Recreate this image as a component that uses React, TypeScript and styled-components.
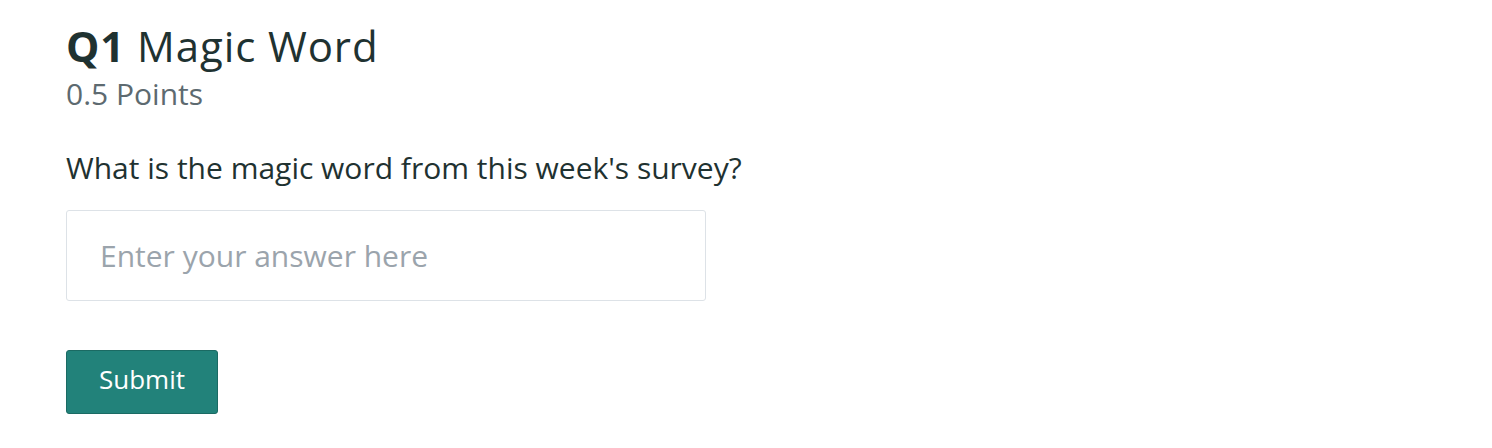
import styled, { createGlobalStyle } from "styled-components";

const FONT = `"Open Sans", "Liberation Sans", sans-serif`;

const GlobalStyle = createGlobalStyle`
  html, body {
    margin: 0;
    padding: 0;
    background: #ffffff;
  }
  body {
    font-family: ${FONT};
    color: #1f3231;
  }
`;

const App = () => {
  return (
    <>
      <GlobalStyle />
      <Page>
        <Header>
          <Title>
            <QNum>Q1</QNum> Magic Word
          </Title>
          <Points>0.5 Points</Points>
        </Header>
        <Prompt>What is the magic word from this week's survey?</Prompt>
        <AnswerInput placeholder="Enter your answer here" />
        <SubmitButton type="button">Submit</SubmitButton>
      </Page>
    </>
  );
};

export default App;

const Page = styled.div`
  display: flex;
  flex-direction: column;
  align-items: flex-start;
  padding: 21px 66px;
`;

const Header = styled.div`
  display: flex;
  flex-direction: column;
`;

const Title = styled.h1`
  margin: 0;
  font-size: 42px;
  font-weight: 400;
  line-height: 50px;
  letter-spacing: 0.9px;
  color: #1f3231;
`;

const QNum = styled.span`
  font-weight: 700;
`;

const Points = styled.div`
  margin-top: 6px;
  font-size: 30px;
  line-height: 34px;
  color: #5d6a70;
`;

const Prompt = styled.p`
  margin: 39px 0 24px;
  font-size: 30px;
  line-height: 36px;
  color: #1f3231;
`;

const AnswerInput = styled.input`
  box-sizing: border-box;
  width: 640px;
  height: 91px;
  padding: 0 33px;
  border: 1px solid #dde2e7;
  border-radius: 3px;
  font-family: ${FONT};
  font-size: 30px;
  color: #1f3231;
  outline: none;

  &::placeholder {
    color: #9ba4ac;
  }
`;

const SubmitButton = styled.button`
  margin-top: 49px;
  box-sizing: border-box;
  width: 152px;
  height: 64px;
  padding: 0 0 7px;
  background: #22827a;
  border: 1px solid #1b6a63;
  border-radius: 3px;
  color: #ffffff;
  font-family: ${FONT};
  font-size: 26px;
  cursor: pointer;
`;
